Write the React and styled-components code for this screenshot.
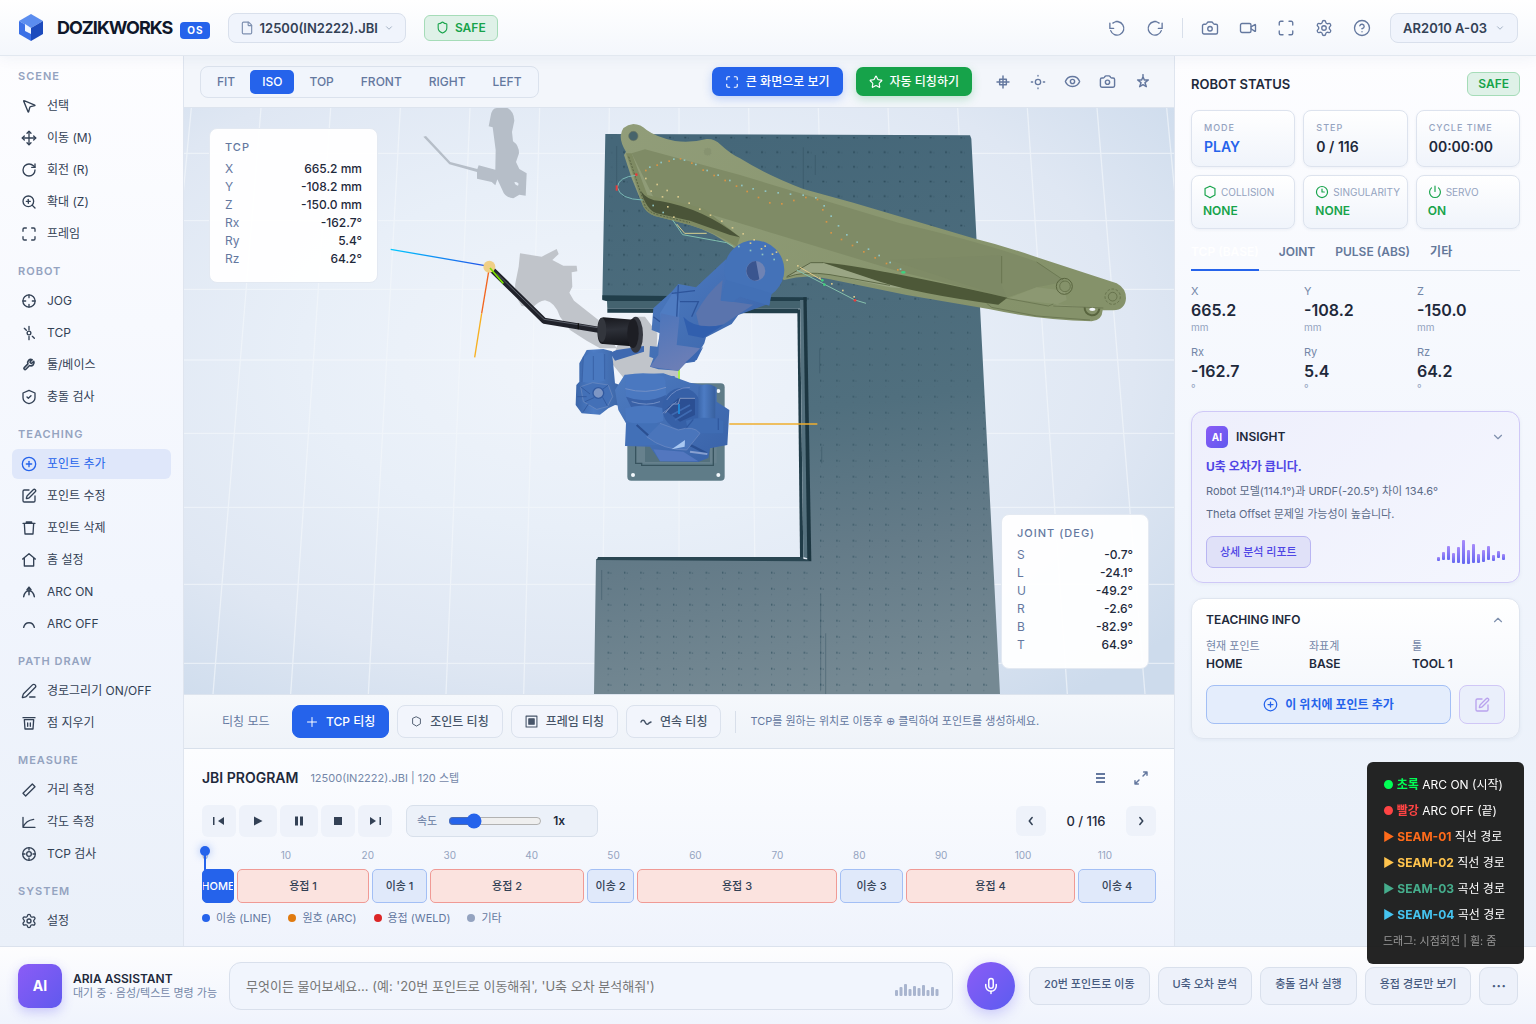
import React, { useState } from 'react';
import styled, { createGlobalStyle, css } from 'styled-components';
import {
  Camera,
  ChevronDown,
  ChevronUp,
  CircleHelp,
  CirclePlus,
  Eye,
  File,
  Maximize,
  Mic,
  MousePointer2,
  Move,
  PenLine,
  RotateCw,
  Settings,
  Shield,
  SquarePen,
  Star,
  Video,
  ZoomIn
} from 'lucide-react';

const GlobalStyle = createGlobalStyle`
  *, *::before, *::after { box-sizing: border-box; }
  body {
    margin: 0;
    background: #eef3fb;
    color: #1e293b;
    font-family: Inter, 'Noto Sans CJK KR', sans-serif;
    font-size: 12px;
    line-height: 16px;
  }
  button, input { font: inherit; color: inherit; }
  button { cursor: pointer; margin: 0; padding: 0; border: 0; background: none; }
  h1, h2, h3, p, dl, dd, ul { margin: 0; padding: 0; }
  ul { list-style: none; }
  svg { flex: none; }
`;

const Glyph = ({ size = 16, width = 2, children }) => (
  <svg
    width={size}
    height={size}
    viewBox="0 0 24 24"
    fill="none"
    stroke="currentColor"
    strokeWidth={width}
    strokeLinecap="round"
    strokeLinejoin="round"
    aria-hidden="true"
  >
    {children}
  </svg>
);

const UndoIcon = () => (
  <Glyph size={18} width={1.8}>
    <path d="M2.500 5.500v7h5M3.600 15.500A9 9 0 1 0 6.500 5.500M10.500 3.300h3" />
  </Glyph>
);
const RedoIcon = () => (
  <Glyph size={18} width={1.8}>
    <path d="M21.500 5.500v7h-5M20.400 15.500A9 9 0 1 1 17.500 5.500M13.500 3.300h-3" />
  </Glyph>
);
const JogIcon = props => (
  <Glyph {...props}>
    <circle cx="12" cy="12" r="9.2" />
    <path d="M12 3v4M12 17v4M3 12h4M17 12h4" />
  </Glyph>
);
const TcpIcon = props => (
  <Glyph {...props}>
    <circle cx="12" cy="12" r="2.8" />
    <path d="M12 2v5M12 17v5M5 5l3 3M17 17l3 3" />
  </Glyph>
);
const ToolIcon = props => (
  <Glyph {...props} width={3}>
    <path
      transform="translate(2 2) scale(.8)"
      d="M14.700 6.300a1 1 0 0 0 0 1.400l1.600 1.600a1 1 0 0 0 1.400 0l3.770-3.770a6 6 0 0 1-7.940 7.940l-6.910 6.910a2.120 2.120 0 0 1-3-3l6.910-6.910a6 6 0 0 1 7.940-7.940l-3.760 3.760z"
    />
  </Glyph>
);
const CheckShieldIcon = props => (
  <Glyph {...props}>
    <path d="M12 2l9 4v7c0 5-4 7.500-9 9-5-1.500-9-4-9-9V6z" />
    <path d="M9 12l2 2 4-4" />
  </Glyph>
);
const BinIcon = props => (
  <Glyph {...props}>
    <path d="M3 5h18M5 5l1 16h12l1-16M8 5V3h8v2" />
  </Glyph>
);
const EraseIcon = props => (
  <Glyph {...props}>
    <path d="M3 4h18M5 7l1 14h12l1-14M5 7h14M10 12v5M14 12v5" />
  </Glyph>
);
const HomeIcon = props => (
  <Glyph {...props}>
    <path d="M2.500 10.500L12 2.500l9.500 8M5 9v12h14V9" />
  </Glyph>
);
const ArcOnIcon = props => (
  <Glyph {...props} width={2.2}>
    <path d="M4 19c1-5 4-9 8-9s7 4 8 9M12 5v11M9 8.500L12 5l3 3.500" />
  </Glyph>
);
const ArcOffIcon = props => (
  <Glyph {...props} width={2.2}>
    <path d="M4 17c1-4 4-7 8-7s7 3 8 7" />
  </Glyph>
);
const RulerIcon = props => (
  <Glyph {...props}>
    <path d="M3 17L17 3l4 4L7 21z" />
  </Glyph>
);
const AngleIcon = props => (
  <Glyph {...props}>
    <path d="M3 5v15h18M3 20C6 13 11 9 19 8" />
  </Glyph>
);
const InspectIcon = props => (
  <Glyph {...props}>
    <circle cx="12" cy="12" r="9.500" />
    <circle cx="12" cy="12" r="3.500" />
    <path d="M12 3v3M12 18v3M3 12h3M18 12h3" />
  </Glyph>
);
const CrossBoxIcon = () => (
  <Glyph size={16} width={2.200}>
    <path d="M12 3v18M3 12h18M7 8h10v8H7z" />
  </Glyph>
);
const FocusIcon = () => (
  <Glyph size={16}>
    <circle cx="12" cy="12" r="4" />
    <path d="M12 2v1M12 21v1M2 12h2M20 12h2" />
  </Glyph>
);
const HexIcon = ({ size = 16 }) => (
  <Glyph size={size}>
    <path d="M12 2l8.500 4v11L12 22l-8.500-5V6z" />
  </Glyph>
);
const ClockIcon = () => (
  <Glyph size={14}>
    <circle cx="12" cy="12" r="9.500" />
    <path d="M12 7v5h4" />
  </Glyph>
);
const PowerIcon = () => (
  <Glyph size={14}>
    <path d="M12 2v9M6 5a9.300 9.300 0 1 0 12 0" />
  </Glyph>
);
const StarIcon = () => (
  <Glyph size={16} width={2.200}>
    <path d="M12 1v3l2 5h6l-5 4 2 6-5-3-5 3 2-6-5-4h6l2-5" />
  </Glyph>
);

/* ---------- shell ---------- */

const Shell = styled.div`
  min-height: 100vh;
  display: grid;
  grid-template-rows: 56px 1fr 78px;
`;

const Header = styled.header`
  position: relative;
  z-index: 2;
  display: flex;
  align-items: center;
  gap: 18px;
  padding: 0 18px;
  background: linear-gradient(180deg, #ffffff, #f4f7fc);
  border-bottom: 1px solid #e2e8f0;
  box-shadow: 0 2px 14px rgba(30, 60, 120, 0.06);
`;

const Brand = styled.div`
  display: flex;
  align-items: center;
  gap: 8px;
  h1 {
    margin-left: 5px;
    font-size: 18px;
    line-height: 24px;
    font-weight: 700;
    color: #0f172a;
    letter-spacing: -1px;
  }
`;

const OsTag = styled.span`
  margin-top: 5px;
  padding: 0 6px 0 7px;
  border-radius: 4px;
  background: #2563eb;
  color: #fff;
  font-size: 10px;
  line-height: 17px;
  font-weight: 700;
  letter-spacing: 1px;
`;

const PickerButton = styled.button`
  height: 30px;
  display: flex;
  align-items: center;
  gap: ${props => (props.$device ? 8 : 6)}px;
  padding: 0 ${props => (props.$device ? 12 : 11)}px;
  margin-left: ${props => (props.$device ? 6 : 0)}px;
  border: 1px solid #d9e0ec;
  border-radius: 8px;
  background: #f0f4fc;
  color: #334155;
  font-size: 13px;
  font-weight: 600;
  svg { color: #94a3b8; }
  svg:first-child { color: #7d8fb0; }
`;

const SafeBadge = styled.span`
  height: ${props => (props.$small ? '24px' : '26px')};
  display: inline-flex;
  align-items: center;
  gap: 6px;
  padding: 0 ${props => (props.$small ? '10px' : '11px')};
  border: 1px solid #a5dcb8;
  border-radius: 6px;
  background: #dff1e8;
  color: #16a34a;
  font-weight: 600;
`;

const HeaderTools = styled.div`
  margin-left: auto;
  display: flex;
  align-items: center;
  gap: 6px;
`;

const IconButton = styled.button`
  width: ${props => props.$size || 32}px;
  height: ${props => props.$size || 32}px;
  display: flex;
  align-items: center;
  justify-content: center;
  border-radius: 6px;
  color: #64789f;
`;

const Divider = styled.span`
  width: 1px;
  height: ${props => props.$height || 20}px;
  margin: 0 ${props => props.$space || 0}px;
  background: #d8dfea;
`;

const Workspace = styled.div`
  display: grid;
  grid-template-columns: 184px minmax(0, 1fr) 362px;
`;

/* ---------- sidebar ---------- */

const Sidebar = styled.nav`
  padding: 12px 12px 10px;
  border-right: 1px solid #dfe5ef;
  background: linear-gradient(180deg, #fdfdff, #f1f5fd 60%, #eaf0f9);
  display: flex;
  flex-direction: column;
  gap: 14px;
`;

const NavTitle = styled.h2`
  margin: 0 6px 7px;
  font-size: 11px;
  line-height: 16px;
  font-weight: 600;
  letter-spacing: 1px;
  color: #94a3c0;
`;

const NavList = styled.ul`
  display: flex;
  flex-direction: column;
  gap: 2px;
`;

const NavButton = styled.button`
  width: 100%;
  height: 30px;
  display: flex;
  align-items: center;
  gap: 10px;
  padding: 0 9px;
  border-radius: 6px;
  color: #334155;
  text-align: left;
  white-space: nowrap;
  ${props =>
    props.$active &&
    css`
      background: #dfe7fa;
      color: #2563eb;
    `}
`;

const navGroups = [
  {
    title: 'SCENE',
    items: [
      ['선택', MousePointer2],
      ['이동 (M)', Move],
      ['회전 (R)', RotateCw],
      ['확대 (Z)', ZoomIn],
      ['프레임', Maximize]
    ]
  },
  {
    title: 'ROBOT',
    items: [
      ['JOG', JogIcon],
      ['TCP', TcpIcon],
      ['툴/베이스', ToolIcon],
      ['충돌 검사', CheckShieldIcon]
    ]
  },
  {
    title: 'TEACHING',
    items: [
      ['포인트 추가', CirclePlus],
      ['포인트 수정', SquarePen],
      ['포인트 삭제', BinIcon],
      ['홈 설정', HomeIcon],
      ['ARC ON', ArcOnIcon],
      ['ARC OFF', ArcOffIcon]
    ]
  },
  {
    title: 'PATH DRAW',
    items: [['경로그리기 ON/OFF', PenLine], ['점 지우기', EraseIcon]]
  },
  {
    title: 'MEASURE',
    items: [
      ['거리 측정', RulerIcon],
      ['각도 측정', AngleIcon],
      ['TCP 검사', InspectIcon]
    ]
  },
  { title: 'SYSTEM', items: [['설정', Settings]] }
];

const SideNav = () => {
  const [active, setActive] = useState('포인트 추가');
  return (
    <Sidebar>
      {navGroups.map(group => (
        <div key={group.title}>
          <NavTitle>{group.title}</NavTitle>
          <NavList>
            {group.items.map(([label, Icon]) => (
              <li key={label}>
                <NavButton
                  $active={active === label}
                  onClick={() => setActive(label)}
                >
                  <Icon size={16} />
                  {label}
                </NavButton>
              </li>
            ))}
          </NavList>
        </div>
      ))}
    </Sidebar>
  );
};

/* ---------- center column ---------- */

const Center = styled.main`
  display: flex;
  flex-direction: column;
  min-width: 0;
`;

const ViewBar = styled.div`
  height: 52px;
  display: flex;
  align-items: center;
  justify-content: space-between;
  padding: 0 14px 0 16px;
  background: #f3f6fb;
  border-bottom: 1px solid #dde4ee;
`;

const Segment = styled.div`
  display: flex;
  gap: 3px;
  padding: 3px 4px;
  border: 1px solid #dbe2ed;
  border-radius: 8px;
  background: #f1f5fc;
`;

const SegmentButton = styled.button`
  height: 24px;
  padding: 0 12px;
  border-radius: 5px;
  font-weight: 500;
  color: ${props => (props.$active ? '#fff' : '#64789f')};
  background: ${props => (props.$active ? '#2563eb' : 'none')};
`;

const BarGroup = styled.div`
  display: flex;
  align-items: center;
`;

const ActionButton = styled.button`
  height: 29px;
  display: flex;
  align-items: center;
  gap: 7px;
  margin-right: 13px;
  padding: 0 13px;
  border-radius: 7px;
  color: #fff;
  font-weight: 500;
  background: ${props => (props.$green ? '#16a34a' : '#2563eb')};
  box-shadow: 0 3px 10px
    ${props =>
      props.$green ? 'rgba(22, 163, 74, 0.25)' : 'rgba(37, 99, 235, 0.25)'};
`;

const Viewport = styled.section`
  flex: 1;
  position: relative;
  min-height: 586px;
  overflow: hidden;
  background: #e4ecf6;
  > svg {
    position: absolute;
    inset: 0;
    width: 100%;
    height: 100%;
  }
`;

const Readout = styled.div`
  position: absolute;
  width: ${props => (props.$corner ? '148px' : '169px')};
  ${props =>
    props.$corner ? 'right: 25px; bottom: 25px;' : 'left: 25px; top: 20px;'}
  padding: 10px 15px 14px;
  border: 1px solid #e3e9f2;
  border-radius: 8px;
  background: rgba(255, 255, 255, 0.95);
  h3 {
    margin-bottom: 5px;
    font-size: 11px;
    line-height: 16px;
    font-weight: 500;
    letter-spacing: 1px;
    color: #64789f;
  }
  dl > div {
    display: flex;
    justify-content: space-between;
    line-height: 18px;
  }
  dt { color: #64789f; }
  dd { color: #1e293b; font-weight: 500; }
`;

const ModeBar = styled.div`
  height: 54px;
  display: flex;
  align-items: center;
  gap: 8px;
  padding: 0 18px 0 38px;
  border-top: 1px solid #dde4ee;
  background: linear-gradient(180deg, #f5f8fc, #eff3f9);
  color: #64789f;
  white-space: nowrap;
`;

const ModeLabel = styled.span`
  width: 62px;
`;

const ModeHint = styled.p`
  font-size: 11px;
  span { font-family: 'DejaVu Sans', sans-serif; }
`;

const ModeButton = styled.button`
  height: 33px;
  display: flex;
  align-items: center;
  gap: 8px;
  padding: 0 13px;
  border: 1px solid ${props => (props.$active ? '#2563eb' : '#dbe2ed')};
  border-radius: 8px;
  background: ${props => (props.$active ? '#2563eb' : '#f2f5fc')};
  color: ${props => (props.$active ? '#fff' : '#475569')};
  font-weight: 500;
`;

const Program = styled.section`
  padding: 14px 18px 20px;
  border-top: 1px solid #d8e0eb;
  background: linear-gradient(180deg, #fcfdff, #eff3fc);
`;

const ProgramHead = styled.div`
  display: flex;
  align-items: center;
  height: 30px;
  h2 {
    font-size: 14px;
    font-weight: 600;
    color: #1e293b;
  }
  p {
    margin: 0 auto 0 12px;
    color: #7487a8;
    font-size: 11px;
  }
`;

const HeadTools = styled.div`
  display: flex;
  gap: 11px;
`;

const Transport = styled.div`
  display: flex;
  align-items: center;
  gap: 3px;
  height: 32px;
  margin-top: 12px;
`;

const TransportButton = styled.button`
  width: ${props => (props.$wide ? 38 : 34)}px;
  height: 32px;
  display: flex;
  align-items: center;
  justify-content: center;
  border-radius: 6px;
  background: #eef2fa;
  color: #334155;
`;

const SpeedBox = styled.label`
  width: 192px;
  height: 32px;
  display: flex;
  align-items: center;
  gap: 11px;
  margin: 0 auto 0 11px;
  padding: 0 10px;
  border: 1px solid #d8e0eb;
  border-radius: 7px;
  background: #ecf1f9;
  color: #64789f;
  font-size: 11px;
  input {
    width: 94px;
    margin: 0;
    accent-color: #2563eb;
  }
  output {
    color: #1e293b;
    font-size: 12px;
    font-weight: 600;
  }
`;

const Pager = styled.div`
  display: flex;
  align-items: center;
  font-size: 13px;
  font-weight: 500;
  color: #1e293b;
  span { width: 80px; text-align: center; }
`;

const PagerButton = styled.button`
  width: 30px;
  height: 30px;
  display: flex;
  align-items: center;
  justify-content: center;
  border-radius: 6px;
  background: #eef2fa;
  color: #334155;
`;

const Timeline = styled.div`
  position: relative;
  margin-top: 10px;
`;

const Ruler = styled.div`
  display: flex;
  padding-right: 10px;
  font-size: 10px;
  line-height: 16px;
  color: #94a3c0;
  span { flex: 82; text-align: center; }
  span:first-child { flex: 43; text-align: left; }
`;

const Playhead = styled.i`
  position: absolute;
  left: -2px;
  top: -1px;
  width: 10px;
  height: 10px;
  border-radius: 50%;
  background: #2563eb;
  box-shadow: 0 0 8px rgba(37, 99, 235, 0.4);
  &::after {
    content: '';
    position: absolute;
    left: 4px;
    top: 8px;
    width: 2px;
    height: 16px;
    background: #2563eb;
  }
`;

const Track = styled.div`
  display: grid;
  gap: 3px;
  margin-top: 6px;
`;

const blockTone = {
  home: css`
    background: #2563eb;
    border-color: #2563eb;
    color: #fff;
  `,
  weld: css`
    background: #fbe3df;
    border-color: #f09a95;
  `,
  move: css`
    background: #e0e9fa;
    border-color: #a3bff5;
  `
};

const Block = styled.button`
  min-width: 0;
  height: 34px;
  border: 1px solid;
  border-radius: 5px;
  overflow: hidden;
  display: flex;
  align-items: center;
  justify-content: center;
  white-space: nowrap;
  font-size: 11px;
  font-weight: 500;
  color: #334155;
  ${props => blockTone[props.$tone]}
`;

const Legend = styled.ul`
  display: flex;
  gap: 17px;
  margin-top: 7px;
  font-size: 11px;
  color: #64789f;
  li {
    display: flex;
    align-items: center;
    gap: 6px;
  }
`;

const Dot = styled.i`
  width: 8px;
  height: 8px;
  border-radius: 50%;
  background: ${props => props.$color};
`;

const blocks = [
  ['HOME', 32, 'home'],
  ['용접 1', 132, 'weld'],
  ['이송 1', 55, 'move'],
  ['용접 2', 154, 'weld'],
  ['이송 2', 47, 'move'],
  ['용접 3', 200, 'weld'],
  ['이송 3', 63, 'move'],
  ['용접 4', 169, 'weld'],
  ['이송 4', 78, 'move']
];

const trackColumns = blocks
  .map(([, size]) => `minmax(0, ${size}fr)`)
  .join(' ');

const tcpRows = [
  ['X', '665.2 mm'],
  ['Y', '-108.2 mm'],
  ['Z', '-150.0 mm'],
  ['Rx', '-162.7°'],
  ['Ry', '5.4°'],
  ['Rz', '64.2°']
];

const jointRows = [
  ['S', '-0.7°'],
  ['L', '-24.1°'],
  ['U', '-49.2°'],
  ['R', '-2.6°'],
  ['B', '-82.9°'],
  ['T', '64.9°']
];

const gridColumns = [-7, -6, -5, -4, -3, -2, -1, 0, 1, 2, 3, 4, 5, 6, 7];
const gridRows = [160, 362, 568, 780, 1000, 1222, 1453, 1690];

// seam points picked up on the boom surface
const seamOrange = [
  [828, 212], [862, 196], [898, 184], [932, 177], [966, 190], [1000, 211],
  [1033, 227], [1066, 242], [1100, 259], [1132, 275], [1166, 293], [1200, 309],
  [1236, 312], [1272, 302], [1308, 293], [1343, 299], [1359, 330], [1370, 366],
  [1384, 399], [1415, 419], [1448, 437], [1482, 456], [1516, 474], [1550, 491],
  [1584, 510]
];
const seamCyan = [
  [840, 202], [874, 188], [912, 178], [944, 181], [978, 194], [1012, 212],
  [1045, 226], [1080, 242], [1116, 257], [1150, 267], [1187, 274], [1225, 279],
  [1262, 283], [1300, 286], [1338, 294], [1363, 318], [1384, 349], [1406, 378],
  [1431, 405], [1462, 427], [1496, 448], [1528, 467], [1561, 488], [1592, 508],
  [850, 317], [880, 338], [1107, 440], [1142, 452], [1178, 464], [1213, 479]
];
const seamYellow = [
  [828, 236], [862, 254], [892, 272], [925, 291], [958, 310], [990, 328],
  [1022, 346], [1056, 364], [1088, 384], [1120, 402], [1153, 420], [1186, 439],
  [1220, 457], [1252, 481], [1284, 498], [1350, 535], [1386, 552], [1419, 572],
  [1453, 591], [844, 274], [878, 291], [894, 321], [912, 352], [1142, 430],
  [1175, 447], [1208, 463]
];

const Seam = ({ points, color }) => (
  <g fill={color}>
    {points.map(([x, y]) => (
      <rect key={`${x}-${y}`} x={x - 3} y={y - 3} width="5" height="5" />
    ))}
  </g>
);

const Scene = () => (
  <svg viewBox="-558 24 2970 1758" preserveAspectRatio="xMidYMid slice">
    <defs>
      <radialGradient id="floor" cx="0.42" cy="0.42" r="0.75">
        <stop offset="0" stopColor="#f1f5fb" />
        <stop offset="0.4" stopColor="#e8eff8" />
        <stop offset="0.72" stopColor="#dfe7f3" />
        <stop offset="1" stopColor="#cddbec" />
      </radialGradient>
      <linearGradient id="table" x1="0.4" y1="0" x2="0.5" y2="1">
        <stop offset="0" stopColor="#456779" />
        <stop offset="0.5" stopColor="#506f7e" />
        <stop offset="0.75" stopColor="#647b88" />
        <stop offset="1" stopColor="#758993" />
      </linearGradient>
      <linearGradient id="boom" x1="0" y1="0" x2="1" y2="0.3">
        <stop offset="0" stopColor="#919d79" />
        <stop offset="1" stopColor="#85926a" />
      </linearGradient>
      <linearGradient id="body" x1="0" y1="0" x2="1" y2="1">
        <stop offset="0" stopColor="#4d7bc0" />
        <stop offset="1" stopColor="#3962a8" />
      </linearGradient>
      <linearGradient id="cyl" x1="0" y1="0" x2="1" y2="0">
        <stop offset="0" stopColor="#3b66aa" />
        <stop offset="0.35" stopColor="#4d7cc4" />
        <stop offset="1" stopColor="#38609f" />
      </linearGradient>
      <linearGradient id="under" x1="0" y1="0" x2="0.4" y2="1">
        <stop offset="0" stopColor="#4c75bb" />
        <stop offset="1" stopColor="#6b7eb6" />
      </linearGradient>
      <linearGradient id="motor" x1="0" y1="0" x2="0.1" y2="1">
        <stop offset="0" stopColor="#17181d" />
        <stop offset="0.45" stopColor="#2d3038" />
        <stop offset="1" stopColor="#15161b" />
      </linearGradient>
      <linearGradient id="axisZ" x1="0" y1="0" x2="1" y2="0">
        <stop offset="0" stopColor="#00c8ff" />
        <stop offset="1" stopColor="#2152e8" />
      </linearGradient>
      <pattern id="holes" width="46" height="44" patternUnits="userSpaceOnUse" x="710" y="108">
        <rect x="3" y="2" width="6" height="5" fill="#203e4c" />
        <rect x="14" y="4" width="3" height="4" fill="#365565" />
      </pattern>
      <pattern id="holesLow" width="49" height="48" patternUnits="userSpaceOnUse" x="710" y="645">
        <rect x="3" y="2" width="4" height="6" fill="#2f505e" />
        <rect x="11" y="4" width="3" height="5" fill="#43606e" />
        <rect x="4" y="20" width="2" height="5" fill="#4b6573" />
      </pattern>
    </defs>

    <rect x="-558" y="24" width="2970" height="1758" fill="url(#floor)" />
    <g stroke="#f4f8fc" strokeWidth="4" opacity="0.65">
      {gridColumns.map(k => (
        <line key={k} x1={927 + k * 209} y1="24" x2={927 + k * 233} y2="1782" />
      ))}
      {gridRows.map(y => (
        <line key={y} x1="-558" y1={y} x2="2412" y2={y} />
      ))}
    </g>

    {/* cast shadows */}
    <path
      d="M362 48Q366 24 380 24H412Q432 34 433 62L426 96 429 124Q447 136 447 160L438 186 448 207 470 220 467 287 448 284 430 295Q404 292 397 270L382 238 376 256 365 246 321 236V216L238 193 160 110 168 108 241 186 322 207 326 196 376 209 377 150 368 82 356 79Z"
      fill="#b6bec8"
    />
    <path
      d="M450 460L515 470 560 447 566 462 547 480 580 497H620L622 514 605 517 607 560 598 578 612 602 690 664 740 745H690L650 722 600 690 570 650Q556 607 525 601 505 604 490 622L455 618Q428 580 438 540L446 500Z"
      fill="#c0c4ca"
    />
    <path d="M800 650H825L862 700 860 745 840 770 925 800V855L770 845 725 790 740 740Z" fill="#c0c4ca" />
    <path d="M433 247q7-4 13 4l-2 6q-8 0-11-10z" fill="#e7eef7" />

    {/* work table */}
    <path
      d="M706 102L1800 106 1804 116 1890 1782H672L678 1377H1320L1296 604H712L697 598Z"
      fill="url(#table)"
    />
    <path d="M722 108L1798 112 1826 600H712Z" fill="url(#holes)" opacity="0.6" />
    <path d="M1322 640H1828L1888 1782H1340ZM690 1395H1340V1782H684Z" fill="url(#holesLow)" opacity="0.7" />
    <path d="M740 138V260M1300 142V265M1336 165V225M1349 745V820M1355 1040V1090M695 1410V1500M1352 1480V1770M1367 1600V1782" stroke="#304f5d" strokeWidth="2" opacity="0.6" />
    <path d="M697 586L1310 592V604H712L697 600Z" fill="#213e4a" />
    <path d="M711 603H1296V626H712Z" fill="#44636f" />
    <path d="M712 626H1284V640L712 638Z" fill="#223f4b" />
    <path d="M1282 628L1290 628 1300 1371H1290Z" fill="#203c48" />
    <path d="M1290 600L1303 600 1316 1376 1300 1371Z" fill="#55717e" />
    <path d="M1300 592L1310 592 1324 1384 1312 1382Z" fill="#1c3641" />
    <path d="M684 1371H1300V1376L1322 1384 680 1380Z" fill="#2a4652" />

    {/* excavator boom */}
    <path
      d="M752 108Q755 75 790 72 812 72 830 90 860 112 915 123 960 130 1010 117 1035 116 1052 134 1080 160 1110 175 1190 225 1300 267L1450 308 1810 415Q1910 440 2010 475L2240 550Q2268 565 2268 595 2266 630 2230 631H2198Q2196 662 2165 664 2010 660 1860 628L1610 585 1380 538Q1310 520 1242 540L1100 450Q1030 395 960 375L870 352Q835 345 820 320L785 235 762 165 768 155Q752 130 752 108Z"
      fill="url(#boom)"
    />
    <path
      d="M825 148L1110 225 1590 370Q1830 425 2000 485L2084 545 2000 562 1910 593 1590 515 1110 370 905 308 850 290 785 160Z"
      fill="#7f8b66"
    />
    <path d="M1560 480L1894 466V552L1910 593Z" fill="#7c8863" opacity="0.5" />
    <path d="M768 160L785 160 832 285 1000 325 1110 412 1100 440Q1030 395 960 375L870 352Q835 345 820 320Z" fill="#7e8a62" />
    <path d="M812 272Q832 302 870 303 1000 325 1110 412L1080 405 960 362 860 340Q830 330 812 272Z" fill="#4a5438" />
    <path d="M776 170L826 320Q836 338 870 346L960 368" stroke="#5a6545" strokeWidth="3" strokeDasharray="6 4" fill="none" />
    <path d="M1250 532L1320 488H1360L1600 565 1560 562 1380 524Q1310 510 1250 532Z" fill="#9aa584" />
    <path d="M1250 532Q1300 512 1380 524L1560 556" stroke="#5f6b48" strokeWidth="3" fill="none" />
    <path d="M1250 530L1322 488H1360" stroke="#5b6645" strokeWidth="3" fill="none" />
    <path d="M1355 487Q1500 500 1912 593L1885 614Q1640 580 1530 545Z" fill="#4d5838" />
    <path d="M1912 596L2000 562 2085 572 2090 600 2050 618 2200 628" fill="#8c9872" />
    <path d="M1905 594L2035 618 2050 612M1850 610L1865 622 2000 648 2160 660M1895 468V550M2000 486L2080 540M2050 618L2200 624" stroke="#616d49" strokeWidth="2" fill="none" />
    <circle cx="790" cy="108" r="14" fill="#47646b" stroke="#6b7760" strokeWidth="2" />
    <circle cx="1013" cy="155" r="12" fill="#879370" stroke="#9aa584" strokeDasharray="4 3" />
    <g fill="none" stroke="#59653f" strokeWidth="3">
      <circle cx="2083" cy="559" r="24" />
      <circle cx="2085" cy="559" r="16" strokeWidth="2" />
      <circle cx="2228" cy="590" r="23" strokeWidth="2" strokeDasharray="8 5" />
      <circle cx="2228" cy="590" r="13" strokeWidth="2" />
      <path d="M2144 622a22 22 0 0 0 44 4" strokeWidth="6" />
    </g>
    <ellipse cx="2167" cy="628" rx="9" ry="5" fill="#f2f5fa" />
    <g fill="none" strokeWidth="3">
      <path d="M800 226Q745 230 742 262 750 298 818 300" stroke="#79b8b5" />
      <path d="M908 360L938 404 1070 428 1090 440" stroke="#82c0ae" />
      <path d="M920 372L944 400H1010" stroke="#d8cf8e" />
      <path d="M1280 510L1455 600 1488 610" stroke="#86c0ac" />
      <path d="M1290 502L1355 540" stroke="#e0c98a" />
    </g>
    <Seam points={seamOrange} color="#d69446" />
    <g fill="#e53b3b">
      <rect x="737" y="256" width="6" height="16" />
      <circle cx="799" cy="224" r="4" />
      <circle cx="1455" cy="601" r="4" />
    </g>
    <g fill="#3fd07f">
      <ellipse cx="1600" cy="517" rx="7" ry="4" />
      <circle cx="1357" cy="541" r="4" />
      <circle cx="1363" cy="554" r="4" />
    </g>

    {/* base plate */}
    <rect x="772" y="850" width="292" height="292" rx="12" fill="#5f7c88" />
    <path d="M797 870H1040V1090H797Z" fill="#67818d" />
    <path d="M797 1035V1090H815V1096H1030V1040" fill="none" stroke="#38545f" strokeWidth="4" />
    <path d="M825 1035H1020V1086H825Z" fill="#54717d" />
    <g fill="#f3f8fc">
      <circle cx="1045" cy="873" r="6" />
      <circle cx="789" cy="1125" r="6" />
      <circle cx="1045" cy="1125" r="6" />
    </g>
    <line x1="927" y1="800" x2="927" y2="850" stroke="#a8f04e" strokeWidth="6" />

    {/* wrist */}
    <path d="M628 790L650 750 700 747 726 754 735 850 765 860 770 920 735 915 715 925 690 944 635 940 617 915 619 855 628 845Z" fill="url(#cyl)" />
    <path d="M720 758L740 750 822 738V755L735 782Z" fill="#3f69b0" />
    <path d="M640 772L662 758H700L704 842 668 850 636 846Z" fill="#4a79c0" />
    <path d="M640 770L636 846M670 768V840M704 762V838" stroke="#3a63a8" strokeWidth="3" />
    <path d="M632 860L668 848 715 855 728 890 712 920 680 928 640 905Z" fill="#4370b7" stroke="#6f8cc0" strokeWidth="2" />
    <path d="M632 860L660 882M715 855L698 868M645 905L672 893M712 918L698 892M622 890H650M640 935L655 912" stroke="#335b9f" strokeWidth="3" />
    <circle cx="685" cy="879" r="16" fill="#7e96c4" stroke="#3159a0" strokeWidth="4" />

    {/* base castings */}
    <path d="M764 824L880 820 915 832 960 848 1040 862V905L1078 930 1072 1035 1020 1045 1015 1074 985 1086 870 1084 840 1040 765 1038 768 970 745 930 735 870Z" fill="url(#body)" />
    <path d="M766 826Q828 812 886 830L888 885Q830 915 768 890Z" fill="#4a78c0" />
    <path d="M880 828H914V838L886 842Z" fill="#4a75bb" />
    <path d="M768 890Q828 914 888 885L878 925H785Z" fill="#3961a7" />
    <path d="M766 925Q825 908 880 925V962Q825 985 768 962Z" fill="#4977bf" />
    <path d="M766 866Q828 884 888 862M785 905Q830 920 870 905" stroke="#7390c6" strokeWidth="3" fill="none" />
    <ellipse cx="935" cy="925" rx="58" ry="62" fill="#3660a7" />
    <path d="M885 930L925 895H975V945L930 965Z" fill="#2b4f93" />
    <path d="M885 940L908 912H925L930 895H975" stroke="#7f93bf" strokeWidth="3" fill="none" />
    <path d="M905 945L960 915M915 960L965 930" stroke="#3f6bb2" strokeWidth="5" />
    <path d="M890 900Q915 862 960 862M878 940L920 905" stroke="#6d8ac4" strokeWidth="3" fill="none" />
    <path d="M986 860Q1010 846 1036 860V955H984Z" fill="url(#cyl)" />
    <path d="M948 962Q1000 945 1060 962V1000H955Z" fill="#3f6cb3" />
    <path d="M948 985L970 958M1045 955V990" stroke="#3059a0" strokeWidth="4" />
    <path d="M768 970H860L880 995V1035H768Z" fill="#4270b7" />
    <path d="M800 975L850 1020 960 1035 1010 1060" stroke="#2b5092" strokeWidth="7" fill="none" />
    <path d="M830 1010Q880 1050 950 1050L990 1000Q970 975 925 990L870 970" fill="#4a75bb" stroke="#6f8cc4" strokeWidth="2" />
    <path d="M905 1048L945 1020 944 1040Z" fill="#a9c8f2" />
    <path d="M850 1048L870 1084H985L940 1055Z" fill="#5377bf" />
    <path d="M960 1055L1012 1062" stroke="#88a0d0" strokeWidth="6" />
    <path d="M927 912V942" stroke="#1d8fe0" strokeWidth="5" />

    {/* upper arm */}
    <path d="M1068 478L978 562 925 552 905 575 850 625 845 690 870 700 862 740 840 738 838 770 850 775 840 800 865 808 925 812 945 790 975 785 985 760 1003 730 1008 712 1085 672 1105 645 1200 610Z" fill="url(#body)" />
    <path d="M912 572L870 640 880 715 925 665 930 610Z" fill="#4f7cc2" />
    <path d="M925 555L920 655M905 580L975 572M930 605H985L965 650M850 650L870 665" stroke="#2d549a" strokeWidth="4" fill="none" />
    <path d="M872 640L928 652 920 735 990 745 925 812 840 800 865 765Z" fill="url(#under)" />
    <path d="M978 640Q1010 580 1058 540L1052 600 1150 614 1062 672 990 690Z" fill="#5a74ad" />
    <path d="M940 650Q975 690 1060 675L1000 714 955 705Z" fill="#315fae" />
    <path d="M945 788L1000 740 980 780Z" fill="#3a67b2" />
    <ellipse cx="1153" cy="510" rx="90" ry="89" fill="#4472b8" />
    <path d="M1068 540L1052 602 1088 606 1110 590 1198 617 1205 580Z" fill="#4270b6" />
    <ellipse cx="1157" cy="513" rx="29" ry="30" fill="#6f83b4" />
    <path d="M1129 513a29 30 0 0 1 29-30l10 55q-12 6-20 3-16-6-19-28z" fill="#3a558f" />
    <Seam points={seamYellow} color="#d6c78b" />
    <Seam points={seamCyan} color="#8fc4c2" />

    {/* torch and motor */}
    <path d="M365 508L522 662 690 690" stroke="#20222a" strokeWidth="18" fill="none" strokeLinejoin="round" />
    <path d="M380 520L522 658 690 684" stroke="#5c616b" strokeWidth="3" fill="none" />
    <path d="M700 652L800 660 805 740 700 732Q682 735 682 690 682 652 700 652Z" fill="url(#motor)" />
    <ellipse cx="797" cy="704" rx="22" ry="54" fill="#34373f" />
    <ellipse cx="789" cy="700" rx="17" ry="44" fill="#1d1e24" />
    <ellipse cx="696" cy="690" rx="13" ry="36" fill="#33363d" />
    <path d="M625 670V688" stroke="#111" strokeWidth="4" />

    {/* tool axes */}
    <path d="M62 448L345 497" stroke="url(#axisZ)" strokeWidth="4" />
    <path d="M356 515L335 640" stroke="#f2651f" strokeWidth="4" />
    <path d="M335 640L314 772" stroke="#f7b020" strokeWidth="4" />
    <circle cx="358" cy="500" r="18" fill="#f0cf86" />
    <path d="M360 504L400 550" stroke="#7be000" strokeWidth="5" />
    <path d="M1078 972H1342" stroke="#efae2e" strokeWidth="4" />
  </svg>
);

const DataCard = ({ title, rows, corner }) => (
  <Readout $corner={corner}>
    <h3>{title}</h3>
    <dl>
      {rows.map(([name, value]) => (
        <div key={name}>
          <dt>{name}</dt>
          <dd>{value}</dd>
        </div>
      ))}
    </dl>
  </Readout>
);

const TransportIcon = ({ d }) => (
  <svg width="14" height="14" viewBox="0 0 14 14" aria-hidden="true">
    <path d={d} fill="currentColor" />
  </svg>
);

const ProgramPanel = () => {
  const [speed, setSpeed] = useState(1);
  return (
    <Program>
      <ProgramHead>
        <h2>JBI PROGRAM</h2>
        <p>12500(IN2222).JBI | 120 스텝</p>
        <HeadTools>
          <IconButton $size={30} aria-label="목록">
            <TransportIcon d="M3 2h9v2H3zM3 6h9v2H3zM3 10h9v2H3z" />
          </IconButton>
          <IconButton $size={30} aria-label="확장">
            <Glyph size={16} width={2.200}>
              <path d="M16 3h5v5M21 3l-6 6M8 21H3v-5M3 21l6-6" />
            </Glyph>
          </IconButton>
        </HeadTools>
      </ProgramHead>
      <Transport>
        <TransportButton aria-label="처음">
          <TransportIcon d="M1 3h1.500v8H1zM12 3v8L6 7z" />
        </TransportButton>
        <TransportButton $wide aria-label="재생">
          <TransportIcon d="M3 2.500v9L11.500 7z" />
        </TransportButton>
        <TransportButton $wide aria-label="일시정지">
          <TransportIcon d="M3 2.500h3v9H3zM8 2.500h3v9H8z" />
        </TransportButton>
        <TransportButton aria-label="정지">
          <TransportIcon d="M3 3h8v8H3z" />
        </TransportButton>
        <TransportButton aria-label="끝">
          <TransportIcon d="M2 3v8l6-4zM11.500 3H13v8h-1.500z" />
        </TransportButton>
        <SpeedBox>
          속도
          <input
            type="range"
            min="0.1"
            max="4"
            step="0.1"
            value={speed}
            onChange={e => setSpeed(Number(e.target.value))}
          />
          <output>{speed}x</output>
        </SpeedBox>
        <Pager>
          <PagerButton aria-label="이전">
            <Glyph size={14} width={2.600}>
              <path d="M14 6l-5 6 5 6" />
            </Glyph>
          </PagerButton>
          <span>0 / 116</span>
          <PagerButton aria-label="다음">
            <Glyph size={14} width={2.600}>
              <path d="M10 6l5 6-5 6" />
            </Glyph>
          </PagerButton>
        </Pager>
      </Transport>
      <Timeline>
        <Ruler>
          {[0, 10, 20, 30, 40, 50, 60, 70, 80, 90, 100, 110].map(step => (
            <span key={step}>{step}</span>
          ))}
        </Ruler>
        <Playhead />
        <Track style={{ gridTemplateColumns: trackColumns }}>
          {blocks.map(([label, , tone]) => (
            <Block key={label} $tone={tone}>
              {label}
            </Block>
          ))}
        </Track>
      </Timeline>
      <Legend>
        <li><Dot $color="#2563eb" />이송 (LINE)</li>
        <li><Dot $color="#e07b10" />원호 (ARC)</li>
        <li><Dot $color="#dc2626" />용접 (WELD)</li>
        <li><Dot $color="#94a3c0" />기타</li>
      </Legend>
    </Program>
  );
};

/* ---------- right column ---------- */

const Inspector = styled.aside`
  padding: 16px;
  border-left: 1px solid #dfe5ef;
  background: linear-gradient(180deg, #fdfdff, #f2f6fd 50%, #e8eff9);
`;

const PanelHead = styled.div`
  display: flex;
  align-items: center;
  justify-content: space-between;
  height: 24px;
  h2 {
    font-size: 13px;
    font-weight: 600;
    color: #1e293b;
  }
`;

const CardGrid = styled.div`
  display: grid;
  grid-template-columns: repeat(3, minmax(0, 1fr));
  gap: 8px;
  margin-top: 14px;
`;

const StatCard = styled.div`
  height: 57px;
  padding: 9px 12px;
  border: 1px solid #dde3ee;
  border-radius: 8px;
  background: linear-gradient(180deg, #ffffff, #f0f4fb);
  box-shadow: 0 1px 3px rgba(30, 60, 120, 0.06);
  span {
    display: block;
    font-size: 9px;
    letter-spacing: 1px;
    font-weight: 500;
    color: #94a3c0;
  }
  strong {
    display: block;
    margin-top: 1px;
    font-size: 14px;
    line-height: 20px;
    font-weight: 600;
    color: ${props => props.$color || '#1e293b'};
  }
`;

const CheckCard = styled(StatCard)`
  height: 54px;
  padding: 8px 11px;
  span {
    display: flex;
    align-items: center;
    gap: 4px;
    font-size: 10px;
    font-weight: 400;
    letter-spacing: 0;
    white-space: nowrap;
  }
  svg { color: #16a34a; }
  strong {
    margin-top: 2px;
    font-size: 12px;
    line-height: 18px;
    color: #16a34a;
  }
`;

const Tabs = styled.div`
  display: flex;
  gap: 20px;
  height: 32px;
  margin-top: 10px;
  border-bottom: 1px solid #dde4ee;
`;

const Tab = styled.button`
  height: 32px;
  padding-bottom: 4px;
  border-bottom: 2px solid ${props => (props.$active ? '#2563eb' : 'transparent')};
  color: ${props => (props.$active ? '#ffffff' : '#64789a')};
  font-weight: 600;
  white-space: nowrap;
`;

const Pose = styled.dl`
  display: grid;
  grid-template-columns: repeat(3, minmax(0, 1fr));
  column-gap: 10px;
  row-gap: 11px;
  margin-top: 12px;
  dt {
    color: #7487a8;
    font-size: 11px;
    line-height: 16px;
  }
  dd {
    color: #1e293b;
    font-size: 16px;
    line-height: 22px;
    font-weight: 600;
  }
  dd + dd {
    color: #94a3c0;
    font-size: 10px;
    line-height: 12px;
    font-weight: 400;
  }
`;

const Card = styled.section`
  margin-top: ${props => (props.$insight ? 17 : 15)}px;
  padding: 14px;
  border: 1px solid ${props => (props.$insight ? '#cfc8f7' : '#dfe5ef')};
  border-radius: 12px;
  background: ${props =>
    props.$insight
      ? 'linear-gradient(135deg, #eeeffc, #f4f6fe)'
      : 'linear-gradient(180deg, #ffffff, #f0f4fb)'};
  box-shadow: 0 1px 4px rgba(30, 60, 120, 0.06);
`;

const CardHead = styled.div`
  display: flex;
  align-items: center;
  gap: 8px;
  height: ${props => props.$height}px;
  h2 {
    flex: 1;
    font-size: 12px;
    font-weight: 600;
    color: #1e293b;
  }
  button { color: #7f90ae; height: 14px; }
`;

const AiTile = styled.span`
  width: ${props => props.$size}px;
  height: ${props => props.$size}px;
  display: flex;
  align-items: center;
  justify-content: center;
  border-radius: ${props => (props.$size > 30 ? 10 : 5)}px;
  background: linear-gradient(135deg, #8b5cf6, #6059ee);
  color: #fff;
  font-size: ${props => (props.$size > 30 ? 14 : 10)}px;
  font-weight: 700;
  box-shadow: ${props =>
    props.$size > 30 ? '0 4px 12px rgba(100, 90, 240, 0.3)' : 'none'};
`;

const InsightTitle = styled.p`
  margin: 11px 0 5px;
  font-weight: 700;
  color: #4f46e5;
`;

const InsightText = styled.p`
  font-size: 11px;
  line-height: 23px;
  color: #5b6b88;
`;

const InsightFoot = styled.div`
  display: flex;
  align-items: center;
  justify-content: space-between;
  margin-top: 10px;
`;

const ReportButton = styled.button`
  height: 32px;
  padding: 0 13px;
  border: 1px solid #b9b5f2;
  border-radius: 7px;
  background: #e0e1f8;
  color: #4f46e5;
  font-size: 11px;
  font-weight: 500;
`;

const TeachGrid = styled.dl`
  display: grid;
  grid-template-columns: repeat(3, minmax(0, 1fr));
  gap: 10px;
  margin: 10px 0 12px;
  dt {
    font-size: 11px;
    line-height: 18px;
    color: #7487a8;
  }
  dd {
    line-height: 18px;
    font-weight: 600;
    color: #1e293b;
  }
`;

const TeachActions = styled.div`
  display: flex;
  gap: 8px;
`;

const AddButton = styled.button`
  flex: 1;
  height: 39px;
  display: flex;
  align-items: center;
  justify-content: center;
  gap: 7px;
  border: 1px solid #a3bff5;
  border-radius: 8px;
  background: #e4edfc;
  color: #2563eb;
  font-weight: 600;
`;

const EditButton = styled.button`
  width: 46px;
  display: flex;
  align-items: center;
  justify-content: center;
  border: 1px solid #d0c7f6;
  border-radius: 8px;
  background: #eaeffb;
  color: #b9a2ee;
`;

// [top, height] of each bar
const voiceBars = [
  [17, 4], [12, 8], [6, 14], [13, 10], [7, 16], [0, 24], [10, 14],
  [4, 19], [14, 9], [10, 12], [6, 14], [15, 6], [11, 7], [14, 6]
];
const inputBars = [6, 9, 12, 7, 10, 8, 11, 6, 9, 7];

const VoiceWave = () => (
  <svg width="68" height="24" viewBox="0 0 68 24" aria-hidden="true">
    <defs>
      <linearGradient id="voice" x1="0" y1="0" x2="0" y2="1">
        <stop offset="0" stopColor="#a78bfa" />
        <stop offset="1" stopColor="#6366f1" />
      </linearGradient>
    </defs>
    {voiceBars.map(([top, height], i) => (
      <rect key={i} x={i * 5} y={top} width="3" height={height} rx="1" fill="url(#voice)" />
    ))}
  </svg>
);

const InputWave = () => (
  <svg width="44" height="20" viewBox="0 0 44 20" fill="#a9b5cf" aria-hidden="true">
    {inputBars.map((height, i) => (
      <rect key={i} x={i * 4.5} y={20 - height} width="3" height={height} rx="1" />
    ))}
  </svg>
);

const pose = [
  ['X', '665.2', 'mm'],
  ['Y', '-108.2', 'mm'],
  ['Z', '-150.0', 'mm'],
  ['Rx', '-162.7', '°'],
  ['Ry', '5.4', '°'],
  ['Rz', '64.2', '°']
];

const StatusPanel = () => {
  const [tab, setTab] = useState('TCP (BASE)');
  return (
    <Inspector>
      <PanelHead>
        <h2>ROBOT STATUS</h2>
        <SafeBadge $small>SAFE</SafeBadge>
      </PanelHead>
      <CardGrid>
        <StatCard $color="#2563eb">
          <span>MODE</span>
          <strong>PLAY</strong>
        </StatCard>
        <StatCard>
          <span>STEP</span>
          <strong>0 / 116</strong>
        </StatCard>
        <StatCard>
          <span>CYCLE TIME</span>
          <strong>00:00:00</strong>
        </StatCard>
        <CheckCard>
          <span><HexIcon size={14} />COLLISION</span>
          <strong>NONE</strong>
        </CheckCard>
        <CheckCard>
          <span><ClockIcon />SINGULARITY</span>
          <strong>NONE</strong>
        </CheckCard>
        <CheckCard>
          <span><PowerIcon />SERVO</span>
          <strong>ON</strong>
        </CheckCard>
      </CardGrid>
      <Tabs>
        {['TCP (BASE)', 'JOINT', 'PULSE (ABS)', '기타'].map(name => (
          <Tab key={name} $active={tab === name} onClick={() => setTab(name)}>
            {name}
          </Tab>
        ))}
      </Tabs>
      <Pose>
        {pose.map(([axis, value, unit]) => (
          <div key={axis}>
            <dt>{axis}</dt>
            <dd>{value}</dd>
            <dd>{unit}</dd>
          </div>
        ))}
      </Pose>
      <Card $insight>
        <CardHead $height={22}>
          <AiTile $size={22}>AI</AiTile>
          <h2>INSIGHT</h2>
          <button aria-label="접기">
            <ChevronDown size={14} />
          </button>
        </CardHead>
        <InsightTitle>U축 오차가 큽니다.</InsightTitle>
        <InsightText>Robot 모델(114.1°)과 URDF(-20.5°) 차이 134.6°</InsightText>
        <InsightText>Theta Offset 문제일 가능성이 높습니다.</InsightText>
        <InsightFoot>
          <ReportButton>상세 분석 리포트</ReportButton>
          <VoiceWave />
        </InsightFoot>
      </Card>
      <Card>
        <CardHead $height={14}>
          <h2>TEACHING INFO</h2>
          <button aria-label="접기">
            <ChevronUp size={14} />
          </button>
        </CardHead>
        <TeachGrid>
          <div>
            <dt>현재 포인트</dt>
            <dd>HOME</dd>
          </div>
          <div>
            <dt>좌표계</dt>
            <dd>BASE</dd>
          </div>
          <div>
            <dt>툴</dt>
            <dd>TOOL 1</dd>
          </div>
        </TeachGrid>
        <TeachActions>
          <AddButton>
            <CirclePlus size={15} />
            이 위치에 포인트 추가
          </AddButton>
          <EditButton aria-label="포인트 수정">
            <SquarePen size={16} />
          </EditButton>
        </TeachActions>
      </Card>
    </Inspector>
  );
};

/* ---------- assistant bar ---------- */

const Footer = styled.footer`
  display: flex;
  align-items: center;
  padding: 0 18px;
  border-top: 1px solid #dbe2ed;
  background: linear-gradient(180deg, #fdfdfe, #f0f4fd);
`;

const AssistantName = styled.div`
  width: 156px;
  margin-left: 11px;
  white-space: nowrap;
  strong {
    display: block;
    line-height: 14px;
    font-weight: 600;
    color: #1e293b;
  }
  span {
    display: block;
    font-size: 11px;
    line-height: 14px;
    color: #7487a8;
  }
`;

const Prompt = styled.div`
  flex: 1;
  min-width: 0;
  height: 48px;
  display: flex;
  align-items: center;
  padding: 0 13px 0 16px;
  border: 1px solid #d9e0ec;
  border-radius: 12px;
  background: #f1f5fd;
  input {
    flex: 1;
    min-width: 0;
    padding: 0;
    border: 0;
    outline: 0;
    background: none;
    font-size: 13px;
  }
  input::placeholder { color: #757575; }
`;

const MicButton = styled.button`
  width: 48px;
  height: 48px;
  display: flex;
  align-items: center;
  justify-content: center;
  margin: 0 14px;
  border-radius: 50%;
  background: linear-gradient(135deg, #8b5cf6, #5b5cf0);
  color: #fff;
  box-shadow: 0 4px 14px rgba(100, 90, 240, 0.3);
`;

const Chips = styled.div`
  display: flex;
  gap: 8px;
`;

const Chip = styled.button`
  height: 38px;
  padding: 0 ${props => (props.$more ? 11 : 14)}px ${props => (props.$more ? 0 : 4)}px;
  border: 1px solid #d9e0ec;
  border-radius: 9px;
  background: #edf1fa;
  color: #475b80;
  font-size: ${props => (props.$more ? 16 : 11)}px;
  font-weight: 500;
  white-space: nowrap;
`;

const KeyPanel = styled.div`
  position: fixed;
  z-index: 5;
  right: 12px;
  bottom: 60px;
  width: 157px;
  height: 202px;
  padding: 10px 0 0 16px;
  border-radius: 6px;
  background: rgba(24, 24, 24, 0.95);
  color: #fff;
  white-space: nowrap;
  p { line-height: 26px; }
  small {
    display: block;
    font-size: 11px;
    line-height: 26px;
    color: #999;
  }
`;

const KeyName = styled.b`
  color: ${props => props.$color};
  font-weight: 700;
`;

const keyRows = [
  ['●', '초록', 'ARC ON (시작)', '#00ff55'],
  ['●', '빨강', 'ARC OFF (끝)', '#ff4444'],
  ['▶', 'SEAM-01', '직선 경로', '#ff6b1a'],
  ['▶', 'SEAM-02', '직선 경로', '#ffc44d'],
  ['▶', 'SEAM-03', '곡선 경로', '#45ad8c'],
  ['▶', 'SEAM-04', '곡선 경로', '#45c4f0']
];

const App = () => {
  const [view, setView] = useState('ISO');
  const [mode, setMode] = useState('TCP 티칭');

  const modes = [
    ['TCP 티칭', <Glyph size={12} key="a"><path d="M12 3v18M3 12h18" /></Glyph>],
    ['조인트 티칭', <HexIcon size={11} key="b" />],
    [
      '프레임 티칭',
      <Glyph size={13} key="c">
        <path d="M2 2h20v20H2z" />
        <path d="M7 7h10v10H7z" fill="currentColor" />
      </Glyph>
    ],
    [
      '연속 티칭',
      <Glyph size={12} width={3} key="d">
        <path d="M2 12c2-5 6-5 8 0s6 6 8 2l4-2" />
      </Glyph>
    ]
  ];

  return (
    <Shell>
      <GlobalStyle />
      <Header>
        <Brand>
          <svg width="26" height="28" viewBox="0 0 26 28" aria-hidden="true">
            <path d="M13 0l12 7-12 7L1 7z" fill="#5b8def" />
            <path d="M1 7l12 7v13L1 20z" fill="#3b70e6" />
            <path d="M25 7l-12 7v13l12-7z" fill="#1c4bbd" />
            <path d="M7 10l6 4v6l-6-3z" fill="#eef4ff" />
          </svg>
          <h1>DOZIKWORKS</h1>
          <OsTag>OS</OsTag>
        </Brand>
        <PickerButton>
          <File size={14} />
          12500(IN2222).JBI
          <ChevronDown size={10} />
        </PickerButton>
        <SafeBadge>
          <Shield size={13} />
          SAFE
        </SafeBadge>
        <HeaderTools>
          <IconButton aria-label="실행 취소"><UndoIcon /></IconButton>
          <IconButton aria-label="다시 실행"><RedoIcon /></IconButton>
          <Divider $space={5} />
          <IconButton aria-label="캡처"><Camera size={18} strokeWidth={1.8} /></IconButton>
          <IconButton aria-label="녹화"><Video size={18} strokeWidth={1.8} /></IconButton>
          <IconButton aria-label="전체 화면"><Maximize size={18} strokeWidth={1.8} /></IconButton>
          <IconButton aria-label="설정"><Settings size={18} strokeWidth={1.8} /></IconButton>
          <IconButton aria-label="도움말"><CircleHelp size={18} strokeWidth={1.8} /></IconButton>
          <PickerButton $device>
            <span>AR2010 A-03</span>
            <ChevronDown size={10} />
          </PickerButton>
        </HeaderTools>
      </Header>

      <Workspace>
        <SideNav />
        <Center>
          <ViewBar>
            <Segment>
              {['FIT', 'ISO', 'TOP', 'FRONT', 'RIGHT', 'LEFT'].map(name => (
                <SegmentButton
                  key={name}
                  $active={view === name}
                  onClick={() => setView(name)}
                >
                  {name}
                </SegmentButton>
              ))}
            </Segment>
            <BarGroup>
              <ActionButton>
                <Maximize size={14} />큰 화면으로 보기
              </ActionButton>
              <ActionButton $green>
                <Star size={14} />자동 티칭하기
              </ActionButton>
              <IconButton $size={35} aria-label="원점"><CrossBoxIcon /></IconButton>
              <IconButton $size={35} aria-label="초점"><FocusIcon /></IconButton>
              <IconButton $size={35} aria-label="표시"><Eye size={17} /></IconButton>
              <IconButton $size={35} aria-label="촬영"><Camera size={17} /></IconButton>
              <IconButton $size={35} aria-label="즐겨찾기"><StarIcon /></IconButton>
            </BarGroup>
          </ViewBar>
          <Viewport>
            <Scene />
            <DataCard title="TCP" rows={tcpRows} />
            <DataCard title="JOINT (DEG)" rows={jointRows} corner />
          </Viewport>
          <ModeBar>
            <ModeLabel>티칭 모드</ModeLabel>
            {modes.map(([name, icon]) => (
              <ModeButton
                key={name}
                $active={mode === name}
                onClick={() => setMode(name)}
              >
                {icon}
                {name}
              </ModeButton>
            ))}
            <Divider $height={22} $space={6} />
            <ModeHint>
              TCP를 원하는 위치로 이동후 <span>⊕</span> 클릭하여 포인트를
              생성하세요.
            </ModeHint>
          </ModeBar>
          <ProgramPanel />
        </Center>
        <StatusPanel />
      </Workspace>

      <Footer>
        <AiTile $size={44}>AI</AiTile>
        <AssistantName>
          <strong>ARIA ASSISTANT</strong>
          <span>대기 중 · 음성/텍스트 명령 가능</span>
        </AssistantName>
        <Prompt>
          <input
            type="text"
            aria-label="명령 입력"
            placeholder="무엇이든 물어보세요... (예: '20번 포인트로 이동해줘', 'U축 오차 분석해줘')"
          />
          <InputWave />
        </Prompt>
        <MicButton aria-label="음성 입력">
          <Mic size={18} />
        </MicButton>
        <Chips>
          <Chip>20번 포인트로 이동</Chip>
          <Chip>U축 오차 분석</Chip>
          <Chip>충돌 검사 실행</Chip>
          <Chip>용접 경로만 보기</Chip>
          <Chip $more>···</Chip>
        </Chips>
      </Footer>

      <KeyPanel>
        {keyRows.map(([mark, name, text, color]) => (
          <p key={name}>
            <KeyName $color={color}>
              {mark} {name}
            </KeyName>{' '}
            {text}
          </p>
        ))}
        <small>드래그: 시점회전 | 휠: 줌</small>
      </KeyPanel>
    </Shell>
  );
};

export default App;
